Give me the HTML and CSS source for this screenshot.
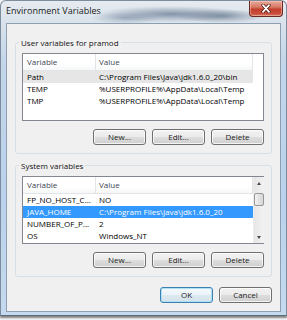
FILE: index.html
```html
<!DOCTYPE html>
<html>
<head>
<meta charset="utf-8">
<title>Environment Variables</title>
<link rel="stylesheet" href="styles.css">
</head>
<body>
<div class="window">
  <div class="titlebar">
    <span class="title">Environment Variables</span>
    <button class="close" aria-label="Close">
      <svg width="12" height="9" viewBox="0 0 12 9">
        <path d="M3 1.2 L9 7.8 M9 1.2 L3 7.8" stroke="#4a1610" stroke-width="3.2" stroke-linecap="round" fill="none"/>
        <path d="M3 1.2 L9 7.8 M9 1.2 L3 7.8" stroke="#ffffff" stroke-width="1.8" stroke-linecap="round" fill="none"/>
      </svg>
    </button>
  </div>
  <div class="client">
    <fieldset class="group">
      <legend>User variables for pramod</legend>
      <div class="list">
        <div class="rows">
          <div class="row head"><span class="c1">Variable</span><span class="c2">Value</span></div>
          <div class="row sel-inactive"><span class="c1">Path</span><span class="c2">C:\Program Files\Java\jdk1.6.0_20\bin</span></div>
          <div class="row"><span class="c1">TEMP</span><span class="c2">%USERPROFILE%\AppData\Local\Temp</span></div>
          <div class="row"><span class="c1">TMP</span><span class="c2">%USERPROFILE%\AppData\Local\Temp</span></div>
        </div>
      </div>
      <div class="buttons">
        <button class="btn">New...</button>
        <button class="btn">Edit...</button>
        <button class="btn">Delete</button>
      </div>
    </fieldset>
    <fieldset class="group group-system">
      <legend>System variables</legend>
      <div class="list">
        <div class="rows">
          <div class="row head"><span class="c1">Variable</span><span class="c2">Value</span></div>
          <div class="row"><span class="c1">FP_NO_HOST_C...</span><span class="c2">NO</span></div>
          <div class="row sel"><span class="c1">JAVA_HOME</span><span class="c2">C:\Program Files\Java\jdk1.6.0_20</span></div>
          <div class="row"><span class="c1">NUMBER_OF_P...</span><span class="c2">2</span></div>
          <div class="row"><span class="c1">OS</span><span class="c2">Windows_NT</span></div>
        </div>
        <div class="scrollbar">
          <div class="arrow up"></div>
          <div class="track"><div class="thumb"></div></div>
          <div class="arrow down"></div>
        </div>
      </div>
      <div class="buttons">
        <button class="btn">New...</button>
        <button class="btn">Edit...</button>
        <button class="btn">Delete</button>
      </div>
    </fieldset>
    <div class="dialog-buttons">
      <button class="btn btn-default">OK</button>
      <button class="btn">Cancel</button>
    </div>
  </div>
</div>
</body>
</html>
```

FILE: styles.css
```css
* { box-sizing: border-box; }

html, body {
  margin: 0;
  padding: 0;
}

body {
  width: 287px;
  height: 320px;
  overflow: hidden;
  background: #f4f5f6;
  font-family: "Open Sans", "Noto Sans", sans-serif;
  font-size: 8px;
  color: #000;
}

.window {
  width: 287px;
  height: 316px;
  padding: 0 5px 3px 5px;
  display: flex;
  flex-direction: column;
  border: 1px solid #7d8c9c;
  border-bottom-color: #5d6b78;
  border-radius: 6px 6px 0 0;
  background:
    radial-gradient(ellipse 75px 8px at 170px 13px, rgba(95,115,140,0.7), rgba(95,115,140,0) 100%),
    radial-gradient(ellipse 45px 7px at 220px 15px, rgba(80,100,125,0.6), rgba(80,100,125,0) 100%),
    radial-gradient(ellipse 35px 6px at 125px 17px, rgba(110,130,155,0.5), rgba(110,130,155,0) 100%),
    linear-gradient(to bottom, #e6ebf0 0px, #d9e2eb 22px, #c3d6ea 60px, #bad2ec 200px, #c5daee 316px);
  box-shadow: 0 2px 2px rgba(40,40,40,0.55);
}

.titlebar {
  height: 22px;
  display: flex;
  justify-content: space-between;
  align-items: flex-start;
}

.title {
  padding-top: 4px;
  font-size: 9px;
  line-height: 11px;
  color: #1b1b1b;
}

.close {
  width: 34px;
  height: 16px;
  margin-right: -2px;
  padding: 0;
  display: flex;
  align-items: center;
  justify-content: center;
  border: 1px solid #6a2a22;
  border-top: none;
  border-radius: 0 0 4px 4px;
  background: linear-gradient(to bottom, #e9ab9c 0%, #d77a66 40%, #c2402d 55%, #c9503c 85%, #d98068 100%);
  box-shadow: inset 0 0 0 1px rgba(255,210,200,0.45);
}

.close svg { display: block; }

.client {
  flex: 1;
  background: #f0f0f0;
  border: 1px solid #8e9fb2;
  padding: 0 8px 8px 8px;
  display: flex;
  flex-direction: column;
}

.group {
  margin: 13px 0 0 0;
  padding: 5px 7px 8px 6px;
  border: 1px solid #d5dfe5;
  border-radius: 3px;
  min-width: 0;
}

.group-system {
  margin-top: 6px;
}

.group legend {
  margin-left: -3px;
  padding: 0 2px;
  font-size: 8px;
  line-height: 11px;
  color: #111;
}

.list {
  height: 68px;
  border: 1px solid #828790;
  background: #fff;
  display: flex;
  justify-content: space-between;
}

.rows {
  width: 230px;
  display: flex;
  flex-direction: column;
}

.row {
  height: 12px;
  line-height: 12px;
  display: flex;
  white-space: nowrap;
}

.row .c1 {
  width: 73px;
  padding-left: 4px;
  overflow: hidden;
}

.row .c2 {
  width: 157px;
  padding-left: 3px;
  overflow: hidden;
}

.row.head {
  height: 17px;
  line-height: 16px;
  color: #3b4653;
  background: linear-gradient(to bottom, #ffffff 0%, #ffffff 60%, #f6f7f8 100%);
  border-bottom: 1px solid #e2e4e7;
}

.row.head .c1,
.row.head .c2 {
  border-right: 1px solid #e2e4e7;
}

.row.sel-inactive {
  background: #e6e6e6;
}

.row.sel {
  background: #3399ff;
  color: #fff;
}

.scrollbar {
  width: 11px;
  display: flex;
  flex-direction: column;
  background: linear-gradient(to right, #e6e6e6, #f2f2f2);
  border-left: 1px solid #ececec;
}

.arrow {
  height: 12px;
  position: relative;
}

.arrow.up::after,
.arrow.down::after {
  content: "";
  position: absolute;
  left: 3px;
  border-left: 2.5px solid transparent;
  border-right: 2.5px solid transparent;
}

.arrow.up::after {
  top: 5px;
  border-bottom: 3px solid #4d4d4d;
}

.arrow.down::after {
  top: 5px;
  border-top: 3px solid #4d4d4d;
}

.track {
  flex: 1;
  padding-top: 4px;
}

.thumb {
  width: 10px;
  height: 13px;
  border: 1px solid #979797;
  border-radius: 2px;
  background: linear-gradient(to right, #f3f3f3, #e2e2e2 50%, #d6d6d6);
}

.buttons {
  margin-top: 8px;
  display: flex;
  justify-content: flex-end;
  gap: 6px;
}

.btn {
  width: 53px;
  height: 16px;
  padding: 0;
  font-family: "Open Sans", "Noto Sans", sans-serif;
  font-size: 8px;
  line-height: 14px;
  color: #222;
  border: 1px solid #707070;
  border-radius: 3px;
  background: linear-gradient(to bottom, #f2f2f2 0%, #ebebeb 48%, #dddddd 52%, #cfcfcf 100%);
  box-shadow: inset 0 0 0 1px rgba(255,255,255,0.75);
}

.dialog-buttons {
  margin-top: 10px;
  display: flex;
  justify-content: flex-end;
  gap: 6px;
}

.btn-default {
  border-color: #3c7fb1;
  background: linear-gradient(to bottom, #f4f9fc 0%, #eaf3f9 48%, #dde9f1 52%, #d3e1ea 100%);
  box-shadow: inset 0 0 0 1px #aee0f8;
}
```
